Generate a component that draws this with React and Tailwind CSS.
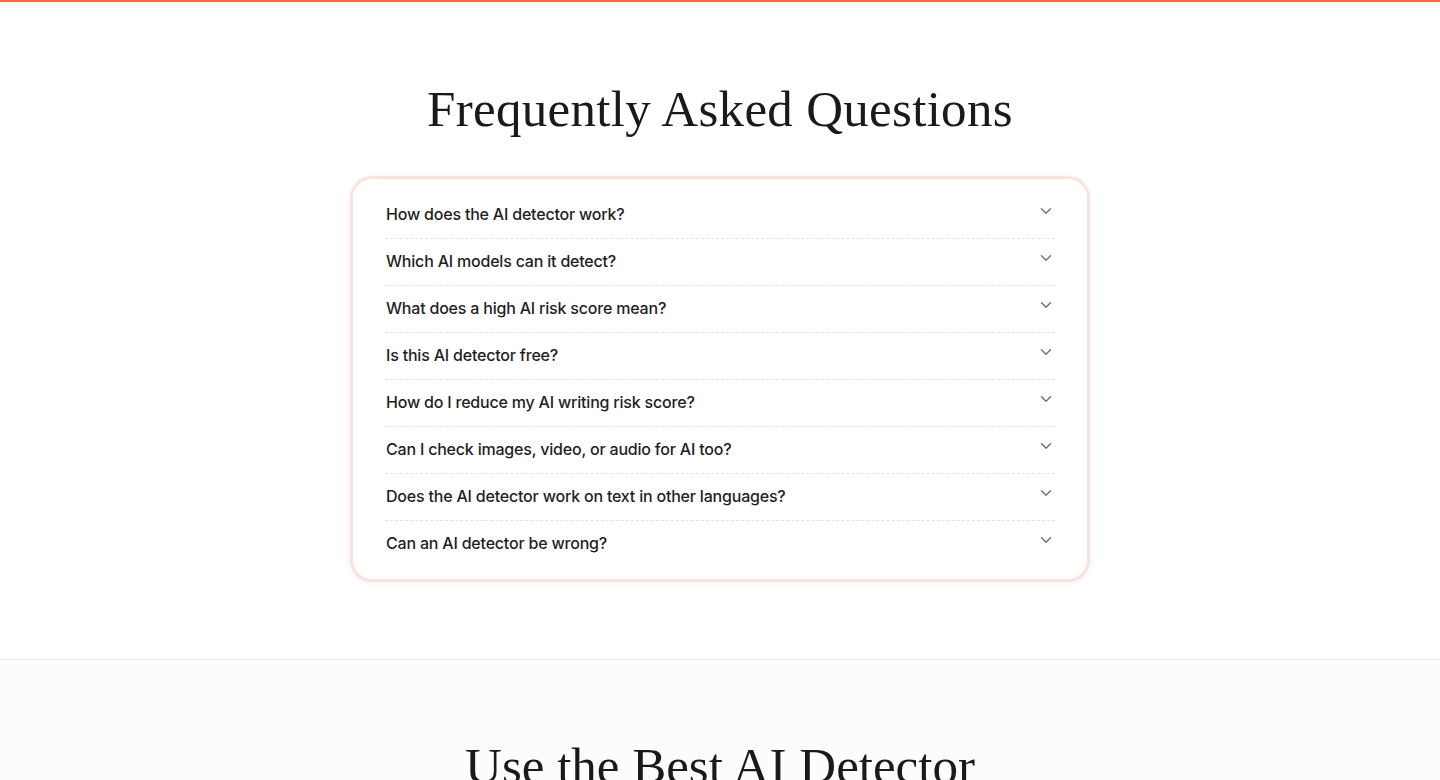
import { useState } from "react";

const faqs = [
  "How does the AI detector work?",
  "Which AI models can it detect?",
  "What does a high AI risk score mean?",
  "Is this AI detector free?",
  "How do I reduce my AI writing risk score?",
  "Can I check images, video, or audio for AI too?",
  "Does the AI detector work on text in other languages?",
  "Can an AI detector be wrong?",
];

function Chevron() {
  return (
    <svg width="12" height="8" viewBox="0 0 12 8" fill="none" stroke="#707070" strokeWidth="1.4" strokeLinecap="round" strokeLinejoin="round">
      <path d="M1.5 1.8 6 6.2l4.5-4.4" />
    </svg>
  );
}

export default function App() {
  const [open, setOpen] = useState(null);

  return (
    <div className="min-h-screen bg-white" style={{ fontFamily: "Inter, 'Noto Sans', sans-serif" }}>
      <div className="h-[2px] bg-[#ff6a3d]" />

      {/* FAQ */}
      <section className="flex flex-col items-center pt-[78px] pb-[77px] border-b border-[#e6e6e6]">
        <h2
          className="text-[51px] leading-[58px] text-[#1a1a1a] tracking-[0.3px]"
          style={{ fontFamily: "'Liberation Serif', 'DejaVu Serif', serif" }}
        >
          Frequently Asked Questions
        </h2>

        <div className="mt-[38px] w-[740px] rounded-[22px] border-[3px] border-[#f9e3de] bg-white px-[32px] pt-[13px] pb-[11px] shadow-[0_1px_4px_rgba(240,200,190,0.35)]">
          {faqs.map((q, i) => (
            <div
              key={q}
              className={`flex items-start justify-between h-[47px] cursor-pointer ${
                i < faqs.length - 1 ? "border-b border-dashed border-[#e2e2e2]" : ""
              }`}
              onClick={() => setOpen(open === i ? null : i)}
            >
              <span className="pl-[1px] pt-[11px] text-[16px] leading-[22px] font-medium text-[#1f1f1f] tracking-[-0.2px]">{q}</span>
              <span className="pt-[15px] pr-[3px]">
                <Chevron />
              </span>
            </div>
          ))}
        </div>
      </section>

      {/* Next section */}
      <section className="bg-[#fcfcfc] flex flex-col items-center pt-[76px] pb-20">
        <h2
          className="text-[51px] leading-[60px] text-[#1a1a1a]"
          style={{ fontFamily: "'Liberation Serif', 'DejaVu Serif', serif" }}
        >
          Use the Best AI Detector
        </h2>
      </section>
    </div>
  );
}
